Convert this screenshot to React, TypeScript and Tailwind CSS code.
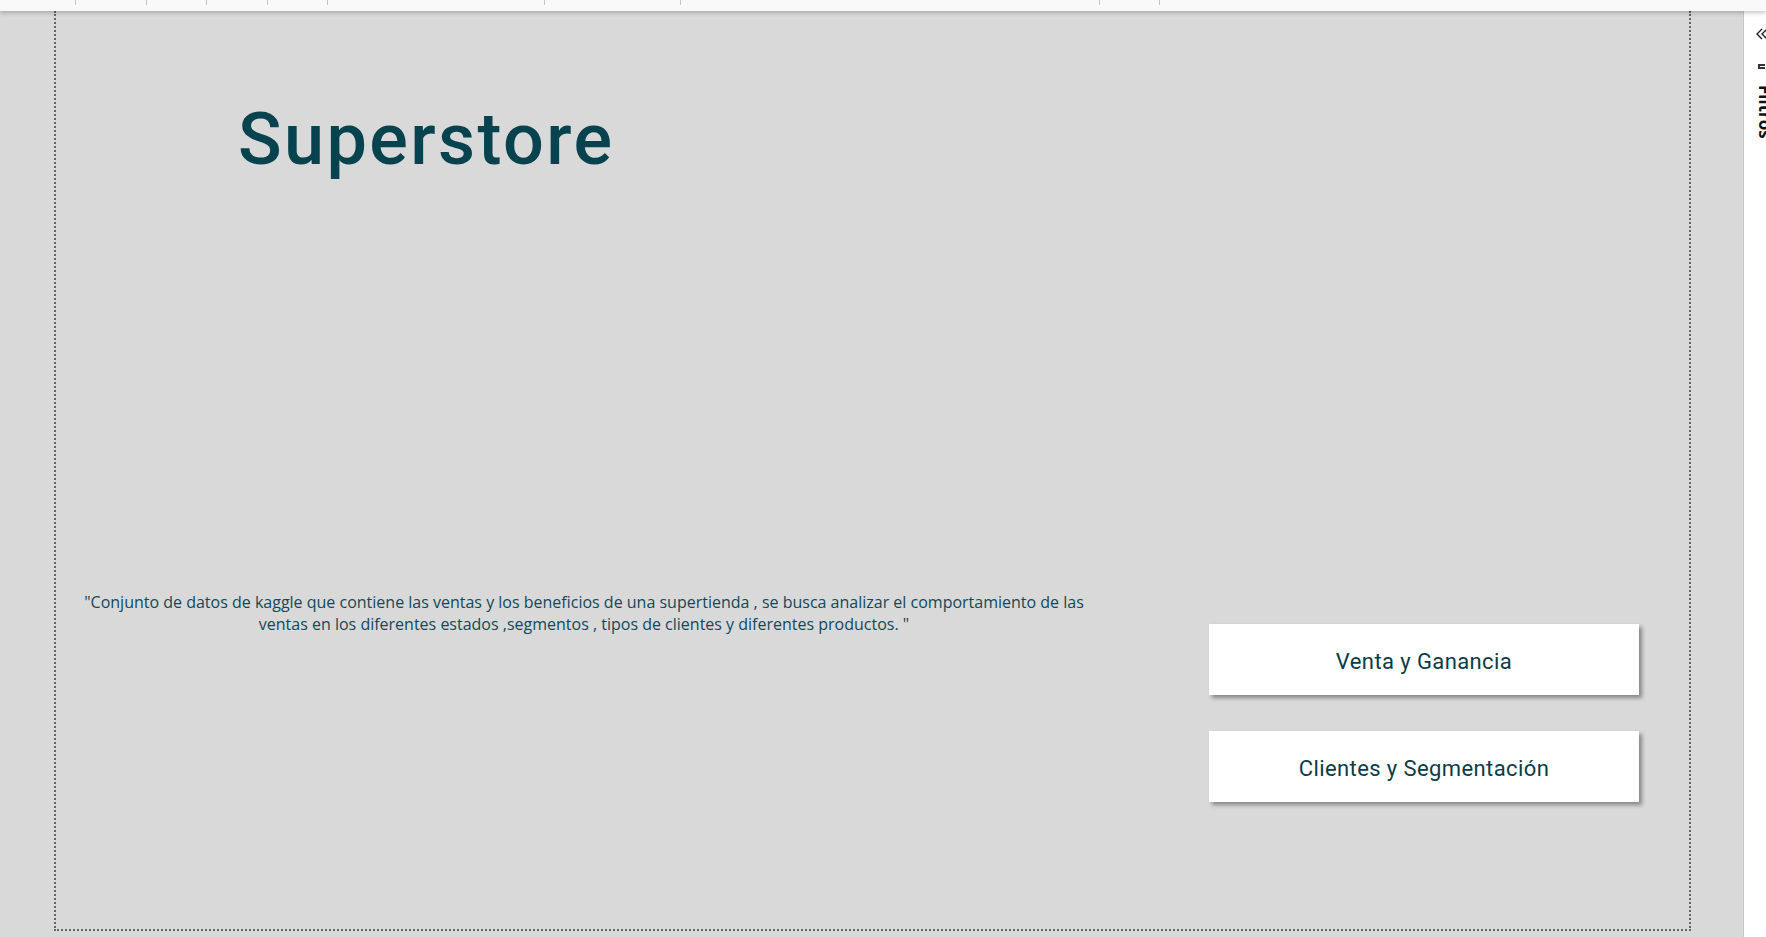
import React from "react";

const ticks = [76, 71, 60, 61, 60, 217, 136, 419, 60];

function Ruler() {
  return (
    <div className="relative z-10 flex h-[11px] w-full shrink-0 bg-[#f9f9f9] shadow-[0_2px_4px_rgba(0,0,0,0.22)]">
      {ticks.map((w, i) => (
        <div key={i} className="h-[5px] shrink-0 border-r border-[#c4c4c4]" style={{ width: w }} />
      ))}
    </div>
  );
}

function NavButton({ label }: { label: string }) {
  return (
    <button className="flex h-[71px] w-[430px] items-center justify-center bg-white pt-[3px] text-[22px] font-normal tracking-[0.4px] text-[#0b3c47] shadow-[3px_3px_4px_rgba(0,0,0,0.38)] [font-family:Roboto,'Liberation_Sans',sans-serif]">
      {label}
    </button>
  );
}

export default function App() {
  return (
    <div className="flex h-[937px] w-[1766px] flex-col overflow-hidden bg-[#d9d9d9]">
      <Ruler />
      <div className="flex min-h-0 flex-1">
        <div className="flex flex-1 flex-col pb-[6px] pl-[54px] pr-[52px]">
          <div className="flex flex-1 flex-col border-b-2 border-l-2 border-r-2 border-dotted border-[#666666]">
            <div className="pl-[182px] pt-[93px]">
              <h1 className="text-[72px] font-medium leading-none tracking-[2.4px] text-[#07434f] [font-family:Roboto,'Liberation_Sans',sans-serif]">
                Superstore
              </h1>
            </div>
            <div className="mt-[415px] flex">
              <p className="ml-[13px] w-[1030px] text-center text-[16px] leading-[22px] text-[#134856] [font-family:'Open_Sans','Noto_Sans',sans-serif]">
                "Conjunto de datos de kaggle que contiene las ventas y los beneficios de una supertienda , se busca analizar el comportamiento de las ventas en los diferentes estados ,segmentos , tipos de clientes y diferentes productos. "
              </p>
              <div className="ml-auto mr-[50px] flex flex-col gap-[36px] pt-[33px]">
                <NavButton label="Venta y Ganancia" />
                <NavButton label="Clientes y Segmentación" />
              </div>
            </div>
          </div>
        </div>
        <div className="w-[23px] shrink-0 overflow-hidden border-l border-[#c8c8c8] bg-white">
          <div className="flex w-[40px] flex-col items-start pl-[12px] pt-[17px]">
            <svg width="14" height="12" viewBox="0 0 14 12" fill="none" stroke="#1f1f1f" strokeWidth="1.4">
              <path d="M6 1 L1 6 L6 11" />
              <path d="M11 1 L6 6 L11 11" />
            </svg>
            <div className="ml-[2px] mt-[24px] h-[5px] w-[7px] border-y-[2px] border-l-[2px] border-[#333]" />
            <div className="-ml-[1px] mt-[16px] text-[17px] font-bold leading-[20px] text-[#111] [writing-mode:vertical-rl] [font-family:'Open_Sans','Noto_Sans',sans-serif]">
              Filtros
            </div>
          </div>
        </div>
      </div>
    </div>
  );
}
